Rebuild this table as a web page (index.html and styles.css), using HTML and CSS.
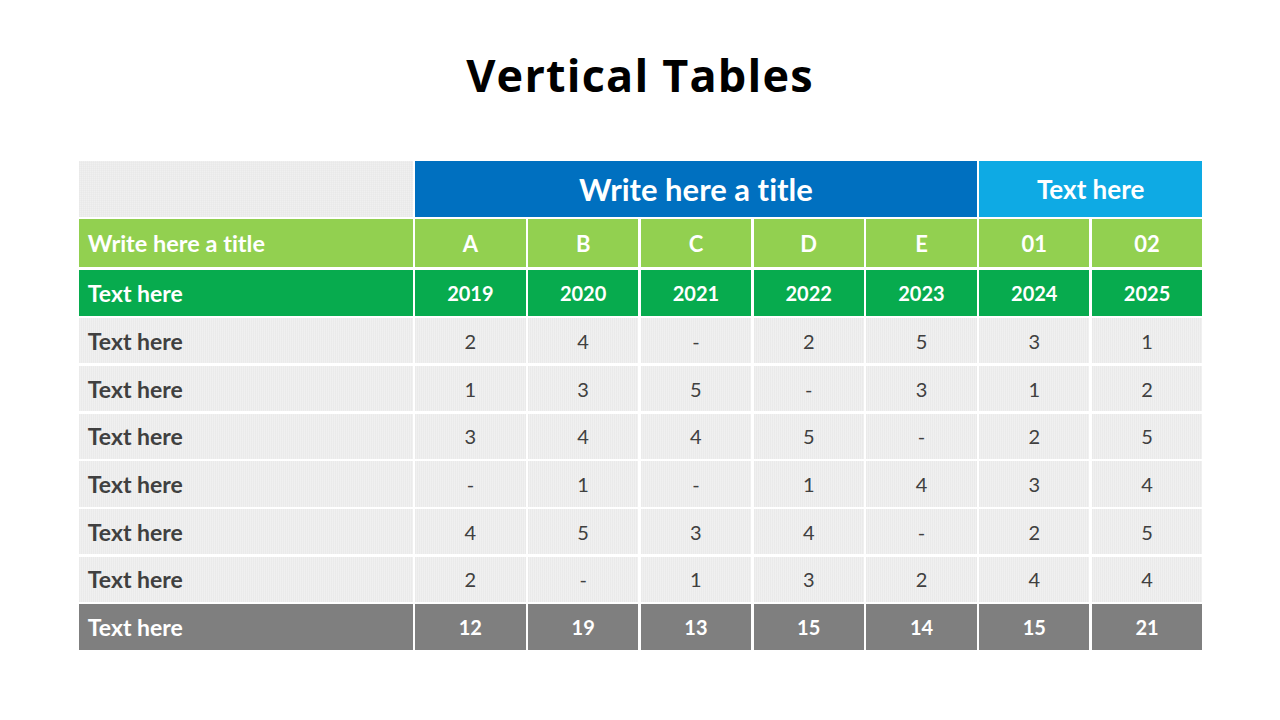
FILE: index.html
```html
<!DOCTYPE html>
<html lang="en">
<head>
<meta charset="utf-8">
<title>Vertical Tables</title>
<link rel="stylesheet" href="styles.css">
</head>
<body>
<div class="slide">
  <h1 class="title">Vertical Tables</h1>
  <div class="table">
    <div class="cell corner"></div>
    <div class="cell head-blue">Write here a title</div>
    <div class="cell head-cyan">Text here</div>

    <div class="cell lg label wide">Write here a title</div>
    <div class="cell lg">A</div><div class="cell lg">B</div><div class="cell lg">C</div><div class="cell lg">D</div><div class="cell lg">E</div><div class="cell lg">01</div><div class="cell lg">02</div>

    <div class="cell dg label">Text here</div>
    <div class="cell dg">2019</div><div class="cell dg">2020</div><div class="cell dg">2021</div><div class="cell dg">2022</div><div class="cell dg">2023</div><div class="cell dg">2024</div><div class="cell dg">2025</div>

    <div class="cell body label">Text here</div>
    <div class="cell body">2</div><div class="cell body">4</div><div class="cell body">-</div><div class="cell body">2</div><div class="cell body">5</div><div class="cell body">3</div><div class="cell body">1</div>

    <div class="cell body label">Text here</div>
    <div class="cell body">1</div><div class="cell body">3</div><div class="cell body">5</div><div class="cell body">-</div><div class="cell body">3</div><div class="cell body">1</div><div class="cell body">2</div>

    <div class="cell body label">Text here</div>
    <div class="cell body">3</div><div class="cell body">4</div><div class="cell body">4</div><div class="cell body">5</div><div class="cell body">-</div><div class="cell body">2</div><div class="cell body">5</div>

    <div class="cell body label">Text here</div>
    <div class="cell body">-</div><div class="cell body">1</div><div class="cell body">-</div><div class="cell body">1</div><div class="cell body">4</div><div class="cell body">3</div><div class="cell body">4</div>

    <div class="cell body label">Text here</div>
    <div class="cell body">4</div><div class="cell body">5</div><div class="cell body">3</div><div class="cell body">4</div><div class="cell body">-</div><div class="cell body">2</div><div class="cell body">5</div>

    <div class="cell body label">Text here</div>
    <div class="cell body">2</div><div class="cell body">-</div><div class="cell body">1</div><div class="cell body">3</div><div class="cell body">2</div><div class="cell body">4</div><div class="cell body">4</div>

    <div class="cell foot label">Text here</div>
    <div class="cell foot">12</div><div class="cell foot">19</div><div class="cell foot">13</div><div class="cell foot">15</div><div class="cell foot">14</div><div class="cell foot">15</div><div class="cell foot">21</div>
  </div>
</div>
</body>
</html>
```

FILE: styles.css
```css
html, body {
  margin: 0;
  padding: 0;
  background: #ffffff;
}

.slide {
  width: 1280px;
  height: 720px;
  display: flex;
  flex-direction: column;
  align-items: center;
  font-family: "Lato", "Open Sans", sans-serif;
  font-variant-ligatures: none;
}

.title {
  margin: 44px 0 0 0;
  height: 62px;
  line-height: 62px;
  font-family: "Open Sans", sans-serif;
  font-weight: 700;
  font-size: 45px;
  color: #000000;
  letter-spacing: 1.2px;
}

.table {
  margin-top: 55px;
  margin-left: 1px;
  display: grid;
  grid-template-columns: 334px repeat(7, 110.4px);
  grid-template-rows: 56px 48px 46px repeat(7, 45.3px);
  column-gap: 2.4px;
  row-gap: 2.4px;
}

.cell {
  display: flex;
  align-items: center;
  justify-content: center;
  font-size: 20px;
  color: #ffffff;
  font-weight: 700;
}

.label {
  justify-content: flex-start;
  padding-left: 9px;
  font-size: 23px;
}

.label.wide {
  font-size: 23.5px;
}

.corner {
  background-color: #f0f0f0;
  background-image: repeating-linear-gradient(90deg, rgba(0,0,0,0.02) 0 1px, rgba(255,255,255,0) 1px 2px),
                    repeating-linear-gradient(0deg, rgba(0,0,0,0.015) 0 1px, rgba(255,255,255,0) 1px 2px);
}

.head-blue {
  grid-column: 2 / span 5;
  background: #0070c0;
  font-size: 31px;
}

.head-cyan {
  grid-column: 7 / span 2;
  background: #0eaae4;
  font-size: 26px;
}

.lg {
  background: #92d050;
  font-size: 22px;
}

.dg {
  background: #07ab4e;
}

.body {
  background-color: #f0f0f0;
  background-image: repeating-linear-gradient(90deg, rgba(0,0,0,0.025) 0 1px, rgba(255,255,255,0) 1px 2px);
  color: #404040;
  font-weight: 400;
}

.body.label {
  font-weight: 700;
}

.foot {
  background: #7f7f7f;
}
```
